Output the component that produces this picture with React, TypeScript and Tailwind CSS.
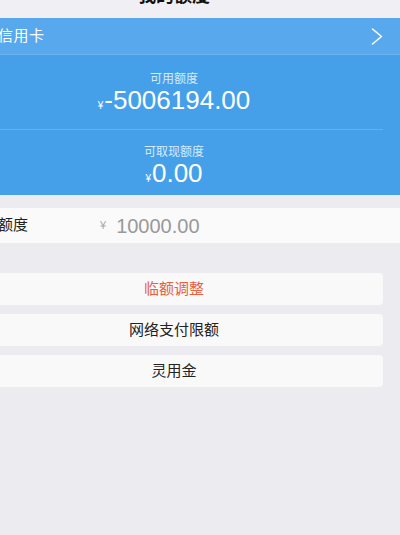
const cjk = {
  fontFamily:
    '"Liberation Sans", "Noto Sans CJK SC", "Noto Sans", sans-serif',
};

function Chevron() {
  return (
    <svg width="12" height="17" viewBox="0 0 12 17" fill="none">
      <polyline
        points="1.5,1 10.5,8.5 1.5,16"
        stroke="white"
        strokeWidth="1.6"
        strokeLinecap="round"
        strokeLinejoin="round"
      />
    </svg>
  );
}

const buttons = [
  { label: "临额调整", color: "text-[#e8603f]" },
  { label: "网络支付限额", color: "text-[#222]" },
  { label: "灵用金", color: "text-[#222]" },
];

function Amount({ label, value, className }: { label: string; value: string; className: string }) {
  return (
    <div className={`flex flex-col items-center ${className}`}>
      <span className="text-[12px] leading-[16px] text-[#d6eafb]">{label}</span>
      <div className="flex items-baseline text-white mt-[1px]">
        <span className="text-[10px] mr-[1px]">¥</span>
        <span className="text-[26px] leading-[24px]">{value}</span>
      </div>
    </div>
  );
}

export default function App() {
  return (
    <div className="w-[400px] h-[535px] overflow-hidden bg-[#ebebf0]" style={cjk}>
      <div className="relative w-[452px] -ml-[52px]">
        {/* nav bar, scrolled mostly out of view */}
        <div className="-mt-[26px] h-[44px] bg-[#efeff4] flex items-center justify-center">
          <span className="text-[18px] font-bold text-[#111]">我的额度</span>
        </div>

        {/* faint floating indicator */}
        <div className="absolute left-[428px] top-[11px] w-[12px] h-[15px] rounded-full border border-white/40" />

        <div className="h-[37px] bg-[#57a8ec] border-b border-[#6cb3ee] flex items-center justify-between pl-[50px] pr-[17px]">
          <span className="text-[15px] text-white tracking-[0.5px]">信用卡</span>
          <Chevron />
        </div>

        <div className="bg-[#45a0e9] h-[140px] flex flex-col">
          <Amount label="可用额度" value="-5006194.00" className="pt-[16px]" />
          <div className="mx-[17px] mt-[16px] h-px bg-[#62b1ef]" />
          <Amount label="可取现额度" value="0.00" className="pt-[14px]" />
        </div>

        <div className="mt-[13px] h-[35px] bg-[#fafafa] flex items-center pl-[50px]">
          <span className="w-[102px] text-[15px] text-[#222]">额度</span>
          <span className="text-[11px] text-[#aaa] mr-[10px]">¥</span>
          <span className="text-[20px] text-[#999]">10000.00</span>
        </div>

        <div className="mt-[30px] mx-[17px] flex flex-col gap-[9px]">
          {buttons.map((b) => (
            <div
              key={b.label}
              className={`h-[32px] rounded-[4px] bg-[#f9f9fa] flex items-center justify-center text-[15px] ${b.color}`}
            >
              {b.label}
            </div>
          ))}
        </div>
      </div>
    </div>
  );
}
